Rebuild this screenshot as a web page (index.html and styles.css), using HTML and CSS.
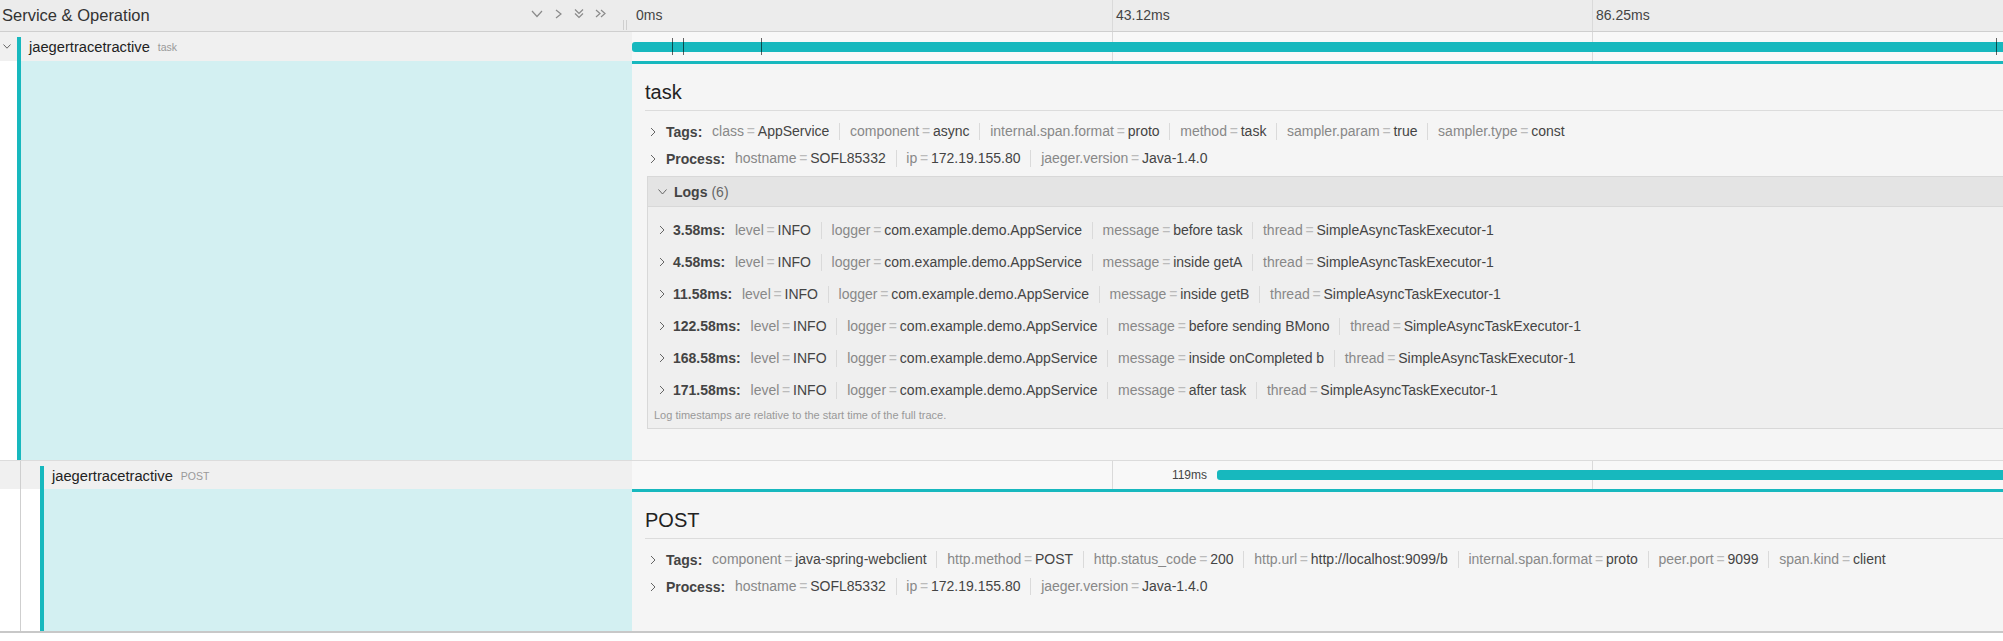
FILE: index.html
```html
<!DOCTYPE html>
<html lang="en">
<head>
<meta charset="utf-8">
<title>Trace</title>
<link rel="stylesheet" href="styles.css">
</head>
<body>
<div class="trace">

  <div class="row hdr">
    <div class="name-col hdr-name">
      <h3 class="hdr-title">Service &amp; Operation</h3>
      <div class="hdr-icons">
        <svg class="hicon" width="12" height="12" viewBox="0 0 12 12"><path d="M1 3 L6 8.5 L11 3"/></svg>
        <svg class="hicon" width="12" height="12" viewBox="0 0 12 12"><path d="M4 2 L9 6 L4 10"/></svg>
        <svg class="hicon" width="12" height="12" viewBox="0 0 12 12"><path d="M2 1.5 L6 5.5 L10 1.5 M2 5.5 L6 9.5 L10 5.5"/></svg>
        <svg class="hicon" width="13" height="12" viewBox="0 0 13 12"><path d="M2 2 L6 5.5 L2 9 M7 2 L11 5.5 L7 9"/></svg>
      </div>
      <div class="resizer"></div>
    </div>
    <div class="tl-col ticks">
      <div class="tick"><span class="tick-label">0ms</span></div>
      <div class="tick"><span class="tick-label">43.12ms</span></div>
      <div class="tick"><span class="tick-label">86.25ms</span></div>
      <div class="tick"></div>
    </div>
  </div>

  <div class="row span-row">
    <div class="name-col">
      <span class="toggle"><svg width="8" height="5" viewBox="0 0 8 5"><path d="M0.5 0.5 L4 4.2 L7.5 0.5"/></svg></span>
      <div class="name-inner">
        <span class="svc">jaegertracetractive</span><span class="op">task</span>
      </div>
    </div>
    <div class="tl-col ticks">
      <div class="tick"></div><div class="tick"></div><div class="tick"></div><div class="tick"></div>
      <div class="bar" style="left:0%;width:100%">
        <i class="log-mark" style="left:2.075%"></i>
        <i class="log-mark" style="left:2.655%"></i>
        <i class="log-mark" style="left:6.713%"></i>
        <i class="log-mark" style="left:71.06%"></i>
        <i class="log-mark" style="left:97.73%"></i>
        <i class="log-mark" style="left:99.47%"></i>
      </div>
    </div>
  </div>

  <div class="row detail-row">
    <div class="name-col">
      <div class="gap-white"></div>
      <div class="accent"></div>
    </div>
    <div class="tl-col detail">
      <h2 class="d-title">task</h2>
      <div class="kv-list">
        <div class="kv-head">
          <svg class="chev" viewBox="0 0 6 10"><path d="M1 1 L5 5 L1 9"/></svg>
          <strong class="kv-label">Tags:</strong>
          <ul class="summary">
            <li><span class="k">class</span><span class="eq">=</span>AppService</li>
            <li><span class="k">component</span><span class="eq">=</span>async</li>
            <li><span class="k">internal.span.format</span><span class="eq">=</span>proto</li>
            <li><span class="k">method</span><span class="eq">=</span>task</li>
            <li><span class="k">sampler.param</span><span class="eq">=</span>true</li>
            <li><span class="k">sampler.type</span><span class="eq">=</span>const</li>
          </ul>
        </div>
        <div class="kv-head">
          <svg class="chev" viewBox="0 0 6 10"><path d="M1 1 L5 5 L1 9"/></svg>
          <strong class="kv-label">Process:</strong>
          <ul class="summary">
            <li><span class="k">hostname</span><span class="eq">=</span>SOFL85332</li>
            <li><span class="k">ip</span><span class="eq">=</span>172.19.155.80</li>
            <li><span class="k">jaeger.version</span><span class="eq">=</span>Java-1.4.0</li>
          </ul>
        </div>
      </div>
      <div class="logs">
        <div class="logs-head">
          <svg class="chev-d" viewBox="0 0 9 6"><path d="M0.5 0.5 L4.5 5 L8.5 0.5"/></svg>
          <strong class="kv-label">Logs</strong><span class="logs-count">(6)</span>
        </div>
        <div class="logs-body">
          <div class="log-row">
            <svg class="chev" viewBox="0 0 6 10"><path d="M1 1 L5 5 L1 9"/></svg>
            <strong class="kv-label">3.58ms:</strong>
            <ul class="summary">
              <li><span class="k">level</span><span class="eq">=</span>INFO</li>
              <li><span class="k">logger</span><span class="eq">=</span>com.example.demo.AppService</li>
              <li><span class="k">message</span><span class="eq">=</span>before task</li>
              <li><span class="k">thread</span><span class="eq">=</span>SimpleAsyncTaskExecutor-1</li>
            </ul>
          </div>
          <div class="log-row">
            <svg class="chev" viewBox="0 0 6 10"><path d="M1 1 L5 5 L1 9"/></svg>
            <strong class="kv-label">4.58ms:</strong>
            <ul class="summary">
              <li><span class="k">level</span><span class="eq">=</span>INFO</li>
              <li><span class="k">logger</span><span class="eq">=</span>com.example.demo.AppService</li>
              <li><span class="k">message</span><span class="eq">=</span>inside getA</li>
              <li><span class="k">thread</span><span class="eq">=</span>SimpleAsyncTaskExecutor-1</li>
            </ul>
          </div>
          <div class="log-row">
            <svg class="chev" viewBox="0 0 6 10"><path d="M1 1 L5 5 L1 9"/></svg>
            <strong class="kv-label">11.58ms:</strong>
            <ul class="summary">
              <li><span class="k">level</span><span class="eq">=</span>INFO</li>
              <li><span class="k">logger</span><span class="eq">=</span>com.example.demo.AppService</li>
              <li><span class="k">message</span><span class="eq">=</span>inside getB</li>
              <li><span class="k">thread</span><span class="eq">=</span>SimpleAsyncTaskExecutor-1</li>
            </ul>
          </div>
          <div class="log-row">
            <svg class="chev" viewBox="0 0 6 10"><path d="M1 1 L5 5 L1 9"/></svg>
            <strong class="kv-label">122.58ms:</strong>
            <ul class="summary">
              <li><span class="k">level</span><span class="eq">=</span>INFO</li>
              <li><span class="k">logger</span><span class="eq">=</span>com.example.demo.AppService</li>
              <li><span class="k">message</span><span class="eq">=</span>before sending BMono</li>
              <li><span class="k">thread</span><span class="eq">=</span>SimpleAsyncTaskExecutor-1</li>
            </ul>
          </div>
          <div class="log-row">
            <svg class="chev" viewBox="0 0 6 10"><path d="M1 1 L5 5 L1 9"/></svg>
            <strong class="kv-label">168.58ms:</strong>
            <ul class="summary">
              <li><span class="k">level</span><span class="eq">=</span>INFO</li>
              <li><span class="k">logger</span><span class="eq">=</span>com.example.demo.AppService</li>
              <li><span class="k">message</span><span class="eq">=</span>inside onCompleted b</li>
              <li><span class="k">thread</span><span class="eq">=</span>SimpleAsyncTaskExecutor-1</li>
            </ul>
          </div>
          <div class="log-row">
            <svg class="chev" viewBox="0 0 6 10"><path d="M1 1 L5 5 L1 9"/></svg>
            <strong class="kv-label">171.58ms:</strong>
            <ul class="summary">
              <li><span class="k">level</span><span class="eq">=</span>INFO</li>
              <li><span class="k">logger</span><span class="eq">=</span>com.example.demo.AppService</li>
              <li><span class="k">message</span><span class="eq">=</span>after task</li>
              <li><span class="k">thread</span><span class="eq">=</span>SimpleAsyncTaskExecutor-1</li>
            </ul>
          </div>
          <p class="logs-foot">Log timestamps are relative to the start time of the full trace.</p>
        </div>
      </div>
    </div>
  </div>

  <div class="row span-row row-child">
    <div class="name-col">
      <div class="guide"></div>
      <div class="gap-child"></div>
      <div class="name-inner">
        <span class="svc">jaegertracetractive</span><span class="op">POST</span>
      </div>
    </div>
    <div class="tl-col ticks">
      <div class="tick"></div><div class="tick"></div><div class="tick"></div><div class="tick"></div>
      <div class="bar" style="left:30.47%;width:68.99%">
        <span class="bar-label">119ms</span>
      </div>
    </div>
  </div>

  <div class="row detail-row detail-last">
    <div class="name-col">
      <div class="guide guide-white"></div>
      <div class="gap-child gap-white"></div>
      <div class="accent"></div>
    </div>
    <div class="tl-col detail">
      <h2 class="d-title">POST</h2>
      <div class="kv-list">
        <div class="kv-head">
          <svg class="chev" viewBox="0 0 6 10"><path d="M1 1 L5 5 L1 9"/></svg>
          <strong class="kv-label">Tags:</strong>
          <ul class="summary">
            <li><span class="k">component</span><span class="eq">=</span>java-spring-webclient</li>
            <li><span class="k">http.method</span><span class="eq">=</span>POST</li>
            <li><span class="k">http.status_code</span><span class="eq">=</span>200</li>
            <li><span class="k">http.url</span><span class="eq">=</span>http://localhost:9099/b</li>
            <li><span class="k">internal.span.format</span><span class="eq">=</span>proto</li>
            <li><span class="k">peer.port</span><span class="eq">=</span>9099</li>
            <li><span class="k">span.kind</span><span class="eq">=</span>client</li>
          </ul>
        </div>
        <div class="kv-head">
          <svg class="chev" viewBox="0 0 6 10"><path d="M1 1 L5 5 L1 9"/></svg>
          <strong class="kv-label">Process:</strong>
          <ul class="summary">
            <li><span class="k">hostname</span><span class="eq">=</span>SOFL85332</li>
            <li><span class="k">ip</span><span class="eq">=</span>172.19.155.80</li>
            <li><span class="k">jaeger.version</span><span class="eq">=</span>Java-1.4.0</li>
          </ul>
        </div>
      </div>
    </div>
  </div>

</div>
</body>
</html>
```

FILE: styles.css
```css
* { box-sizing: border-box; }

html, body {
  margin: 0;
  padding: 0;
  background: #fff;
  overflow: hidden;
}

body {
  font-family: "Liberation Sans", Arial, Helvetica, sans-serif;
  color: #333;
}

.trace { width: 2552px; }

.row { display: flex; }

.name-col {
  width: 632px;
  flex: none;
  display: flex;
}

.tl-col {
  width: 1920px;
  flex: none;
  position: relative;
}

/* ---------- header ---------- */
.hdr {
  height: 32px;
  background: #ececec;
  border-bottom: 1px solid #cfcfcf;
}

.hdr-name {
  align-items: center;
  padding-left: 2px;
}

.hdr-title {
  flex: 1;
  margin: 0;
  font-size: 16.5px;
  font-weight: normal;
  line-height: 31px;
  color: #333;
  white-space: nowrap;
}

.hdr-icons {
  display: flex;
  gap: 9px;
  align-self: flex-start;
  padding-top: 8px;
}

.hicon path {
  fill: none;
  stroke: #8a8a8a;
  stroke-width: 1.2;
}

.resizer {
  width: 4px;
  height: 10px;
  border-left: 1px solid #cfcfcf;
  border-right: 1px solid #cfcfcf;
  margin: 0 5px 1px 16px;
  align-self: flex-end;
}

.ticks { display: flex; }

.tick {
  flex: 1;
  border-left: 1px solid #dadada;
}

.tick:first-child { border-left-color: transparent; }

.tick-label {
  display: block;
  padding-left: 3px;
  font-size: 14px;
  line-height: 31px;
  color: #444;
  white-space: nowrap;
}

/* ---------- span rows ---------- */
.span-row { height: 29px; }

.span-row .name-col { background: #f0f0f0; }
.span-row .tl-col { background: #f8f8f8; }

.row-child { border-top: 1px solid #dcdcdc; }

.toggle {
  width: 17px;
  flex: none;
  display: flex;
  align-items: center;
  padding-left: 3px;
}

.toggle path {
  fill: none;
  stroke: #666;
  stroke-width: 1;
}

.name-inner {
  display: flex;
  align-items: center;
  margin-top: 5px;
  padding: 0 0 4px 8px;
  border-left: 4px solid #17b8be;
  white-space: nowrap;
}

.svc {
  font-size: 14.7px;
  color: #222;
}

.op {
  font-size: 10.5px;
  color: #999;
  margin-left: 8px;
}

.guide {
  width: 21px;
  flex: none;
  border-right: 1px solid #cfcfcf;
}

.gap-child {
  width: 19px;
  flex: none;
}

.bar {
  position: absolute;
  top: calc(50% - 5px);
  height: 10px;
  background: #17b8be;
  border-radius: 3px;
}

.log-mark {
  position: absolute;
  top: -4px;
  width: 1px;
  height: 17px;
  background: rgba(0, 0, 0, 0.6);
}

.bar-label {
  position: absolute;
  right: 100%;
  top: 50%;
  transform: translateY(-50%);
  margin-right: 10px;
  font-size: 12px;
  color: #444;
  white-space: nowrap;
}

/* ---------- detail rows ---------- */
.gap-white {
  width: 17px;
  flex: none;
  background: #fff;
}

.gap-child.gap-white { width: 19px; }

.guide-white { background: #fff; }

.accent {
  flex: 1;
  background: #d3f0f2;
  border-left: 4px solid #17b8be;
}

.detail {
  background: #f5f5f5;
  border-top: 3px solid #17b8be;
  padding: 16px 0 31px 13px;
  white-space: nowrap;
}

.detail-last { border-bottom: 2px solid #c8c8c8; }

.d-title {
  margin: 0;
  font-size: 20px;
  line-height: 24px;
  font-weight: normal;
  color: #222;
  padding-bottom: 6px;
  border-bottom: 1px solid #dcdcdc;
}

.kv-list { margin-top: 7px; }

.kv-head {
  height: 27px;
  display: flex;
  align-items: center;
  font-size: 14px;
}

.chev {
  width: 6px;
  height: 10px;
  flex: none;
  margin: 0 10px 0 5px;
}

.chev path, .chev-d path {
  fill: none;
  stroke: #666;
  stroke-width: 1;
}

.kv-label {
  font-weight: bold;
  color: #444;
}

.summary {
  display: flex;
  list-style: none;
  margin: 0;
  padding: 0;
}

.summary li {
  padding: 0 0.7em;
  line-height: 17px;
  border-right: 1px solid #dadada;
  color: #444;
}

.summary li:last-child { border-right: 0; }

.k { color: #888; }

.eq {
  color: #bbb;
  padding: 0 0.2em;
}

/* ---------- logs ---------- */
.logs {
  margin: 4px 0 0 2px;
  border: 1px solid #d8d8d8;
  background: #efefef;
}

.logs-head {
  height: 30px;
  display: flex;
  align-items: center;
  padding-left: 10px;
  background: #e4e4e4;
  border-bottom: 1px solid #d8d8d8;
  font-size: 14px;
}

.chev-d {
  width: 9px;
  height: 6px;
  flex: none;
  margin-right: 7px;
}

.logs-count {
  color: #666;
  margin-left: 4px;
}

.logs-body { padding: 7px 0 4px 6px; }

.log-row {
  height: 32px;
  display: flex;
  align-items: center;
  font-size: 14px;
  padding-left: 5px;
}

.log-row .chev { margin: 0 8px 0 0; }

.logs-foot {
  margin: 0;
  font-size: 11px;
  line-height: 18px;
  color: #999;
}
```
